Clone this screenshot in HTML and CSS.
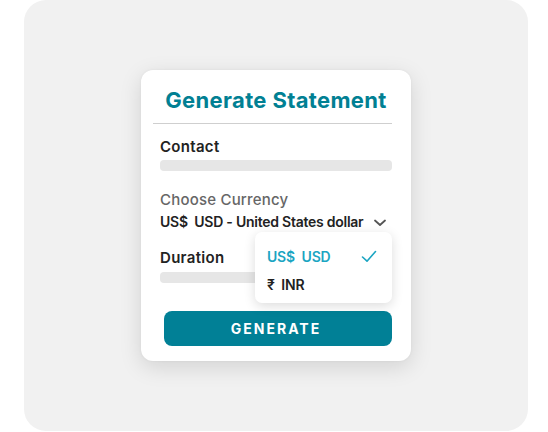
FILE: index.html
```html
<!DOCTYPE html>
<html>
<head>
<meta charset="utf-8">
<link rel="stylesheet" href="styles.css">
</head>
<body>
<div class="panel">
  <div class="card">
    <h1 class="title">Generate Statement</h1>
    <div class="divider"></div>
    <div class="field">
      <div class="label">Contact</div>
      <div class="bar"></div>
    </div>
    <div class="field currency">
      <div class="label muted">Choose Currency</div>
      <div class="select">
        <span>US$&nbsp; USD - United States dollar</span>
        <svg class="chev" width="12" height="8" viewBox="0 0 12 8"><path d="M1 1.5 L6 6 L11 1.5" fill="none" stroke="#555" stroke-width="1.8" stroke-linecap="round" stroke-linejoin="round"/></svg>
      </div>
    </div>
    <div class="field duration">
      <div class="label">Duration</div>
      <div class="bar"></div>
    </div>
    <button class="btn">GENERATE</button>
    <div class="menu">
      <div class="opt active"><span>US$&nbsp; USD</span>
        <svg width="16" height="13" viewBox="0 0 16 13"><path d="M1.5 7 L6 11.2 L14.5 1.5" fill="none" stroke="#1ba5c2" stroke-width="1.6" stroke-linecap="round" stroke-linejoin="round"/></svg>
      </div>
      <div class="opt"><span>₹&nbsp; INR</span></div>
    </div>
  </div>
</div>
</body>
</html>
```
FILE: styles.css
```css
* { box-sizing: border-box; }
body { margin: 0; background: #fff; font-family: "Inter", "Lato", sans-serif; }
.panel {
  margin-left: 24px;
  width: 504px;
  height: 431px;
  background: #f1f1f1;
  border-radius: 22px;
  padding: 70px 0 0 117px;
}
.card {
  position: relative;
  width: 270px;
  height: 291px;
  background: #fff;
  border-radius: 12px;
  box-shadow: 0 6px 22px rgba(0,0,0,0.13), 0 0 3px rgba(0,0,0,0.05);
  padding: 16px 19px 0 12px;
}
.title {
  margin: 0;
  text-align: center;
  color: #018093;
  font-size: 22px;
  font-weight: 700;
  letter-spacing: 0.35px;
  line-height: 29px;
  padding-left: 7px;
}
.divider { height: 1px; background: #cfcfcf; margin-top: 8px; }
.field { padding-left: 7px; }
.label { font-size: 15px; font-weight: 600; color: #222; line-height: 18px; margin-top: 14px; letter-spacing: 0.3px; }
.label.muted { color: #666; font-weight: 500; letter-spacing: 0.2px; }
.bar { height: 11px; background: #e6e6e6; border-radius: 4px; margin-top: 4px; }
.currency .label { margin-top: 20px; }
.select { display: flex; align-items: center; justify-content: space-between; font-size: 14px; font-weight: 600; color: #222; margin-top: 4px; line-height: 18px; padding-right: 6px; letter-spacing: -0.25px; }
.chev { margin-top: 2px; }
.duration .label { margin-top: 18px; }
.duration .bar { margin-top: 5px; }
.btn {
  display: block;
  margin: 28px 0 0 11px;
  width: 228px;
  height: 35px;
  border: none;
  border-radius: 8px;
  background: #018096;
  color: #fff;
  font-family: inherit;
  font-size: 14px;
  font-weight: 700;
  letter-spacing: 2px;
  padding-left: 2px;
}
.menu {
  position: absolute;
  left: 114px;
  top: 162px;
  width: 137px;
  height: 71px;
  background: #fff;
  border-radius: 7px;
  box-shadow: 0 3px 12px rgba(0,0,0,0.14);
  padding: 10px 15px 0 12px;
}
.opt { display: flex; align-items: center; justify-content: space-between; height: 28px; font-size: 14px; font-weight: 600; color: #222; letter-spacing: -0.2px; }
.opt.active { color: #1ba5c2; }
```
